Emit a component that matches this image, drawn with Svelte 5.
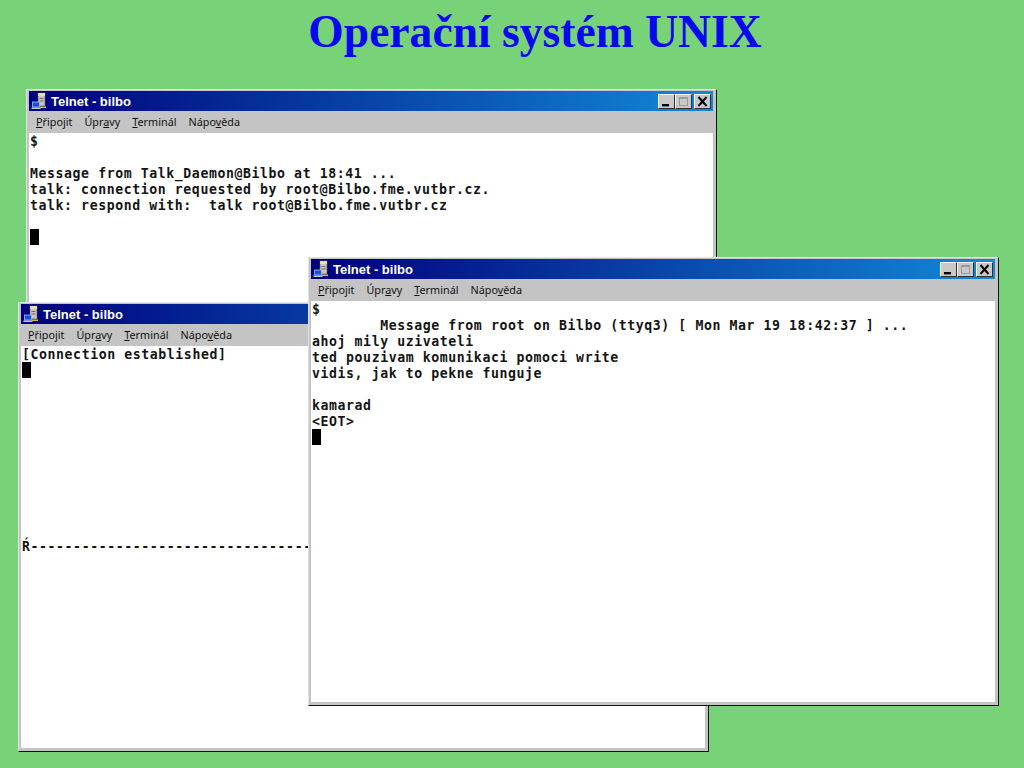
<script>
  const menu = [
    { before: "", key: "P", after: "řipojit" },
    { before: "Úpr", key: "a", after: "vy" },
    { before: "", key: "T", after: "erminál" },
    { before: "Nápo", key: "v", after: "ěda" },
  ];

  const windows = [
    {
      id: "back",
      lines: [
        "$",
        "",
        "Message from Talk_Daemon@Bilbo at 18:41 ...",
        "talk: connection requested by root@Bilbo.fme.vutbr.cz.",
        "talk: respond with:  talk root@Bilbo.fme.vutbr.cz",
        "",
      ],
    },
    {
      id: "left",
      lines: [
        "[Connection established]",
      ],
      after: ["", "", "", "", "", "", "", "", "", "", "Ŕ" + "-".repeat(60)],
    },
    {
      id: "front",
      lines: [
        "$",
        "        Message from root on Bilbo (ttyq3) [ Mon Mar 19 18:42:37 ] ...",
        "ahoj mily uzivateli",
        "ted pouzivam komunikaci pomoci write",
        "vidis, jak to pekne funguje",
        "",
        "kamarad",
        "<EOT>",
      ],
    },
  ];
</script>

<main class="slide">
  <h1>Operační systém UNIX</h1>

  {#each windows as win}
    <section class="window {win.id}">
      <header class="titlebar">
        <svg class="app-icon" viewBox="0 0 18 18" width="18" height="18" aria-hidden="true">
          <rect x="8" y="1" width="7" height="13" fill="#c9c6bc" stroke="#55534c" stroke-width="0.6" />
          <rect x="8" y="1" width="7" height="3" fill="#e8dcb0" />
          <rect x="9.5" y="6" width="4" height="1" fill="#6a6a6a" />
          <rect x="9.5" y="8.5" width="4" height="1" fill="#6a6a6a" />
          <rect x="2.5" y="10" width="7" height="5" fill="#1450e0" stroke="#a8c0f0" stroke-width="0.8" />
          <rect x="1.5" y="15.5" width="9" height="1.5" fill="#c8c8c8" />
          <rect x="10" y="14.5" width="6" height="1.5" fill="#e8b830" />
        </svg>
        <span class="title">Telnet - bilbo</span>
        <div class="controls">
          <button type="button" class="ctl" aria-label="Minimize">
            <svg viewBox="0 0 13 11" width="13" height="11"><rect x="2" y="8" width="7" height="2.4" fill="#000" /></svg>
          </button>
          <button type="button" class="ctl" aria-label="Maximize">
            <svg viewBox="0 0 13 11" width="13" height="11"><rect x="2.5" y="1.5" width="8" height="8" fill="none" stroke="#9a9a9a" /><rect x="2" y="1" width="9" height="2" fill="#9a9a9a" /></svg>
          </button>
          <button type="button" class="ctl close" aria-label="Close">
            <svg viewBox="0 0 13 11" width="13" height="11"><path d="M2.5 1 L10.5 10 M10.5 1 L2.5 10" stroke="#000" stroke-width="2" fill="none" /></svg>
          </button>
        </div>
      </header>
      <nav class="menu">
        {#each menu as item}
          <span>{item.before}<u>{item.key}</u>{item.after}</span>
        {/each}
      </nav>
      <div class="terminal">
        {#each win.lines as line}
          <div class="line">{line}</div>
        {/each}
        <div class="line"><span class="cursor"></span></div>
        {#if win.after}
          {#each win.after as line}
            <div class="line">{line}</div>
          {/each}
        {/if}
      </div>
    </section>
  {/each}
</main>

<style>
  :global(body) {
    margin: 0;
    background: #78d278;
  }

  .slide {
    position: relative;
    width: 1024px;
    height: 768px;
    overflow: hidden;
    background: #78d278;
  }

  h1 {
    margin: 0;
    padding: 6px 0 0 46px;
    text-align: center;
    font: bold 45.6px/52px "Liberation Serif", serif;
    color: #0808f0;
  }

  .window {
    position: absolute;
    box-sizing: border-box;
    width: 691px;
    display: flex;
    flex-direction: column;
    padding: 1px 3px 3px 2px;
    background: #c4c4c4;
    border: 1px solid;
    border-color: #e4e4e4 #111 #111 #e4e4e4;
  }

  .back {
    left: 26px;
    top: 89px;
    height: 320px;
  }

  .left {
    left: 18px;
    top: 302px;
    height: 450px;
  }

  .front {
    left: 308px;
    top: 257px;
    height: 449px;
  }

  .titlebar {
    flex: none;
    height: 20px;
    display: flex;
    align-items: center;
    gap: 3px;
    padding: 0 2px 0 1px;
    background: linear-gradient(90deg, #00007c, #1088d8);
    color: #fff;
  }

  .app-icon {
    flex: none;
  }

  .title {
    font: bold 13px "Liberation Sans", sans-serif;
  }

  .controls {
    margin-left: auto;
    display: flex;
  }

  .ctl {
    box-sizing: border-box;
    width: 17px;
    height: 15px;
    padding: 0;
    display: grid;
    place-items: center;
    background: #c8c8c8;
    border: 1px solid;
    border-color: #f4f4f4 #303030 #303030 #f4f4f4;
  }

  .close {
    margin-left: 2px;
  }

  .menu {
    flex: none;
    box-sizing: border-box;
    height: 22px;
    display: flex;
    align-items: center;
    gap: 12px;
    padding: 0 0 2px 7px;
    font: 10.8px "Noto Sans", sans-serif;
    color: #111;
  }

  .terminal {
    flex: 1;
    min-height: 0;
    overflow: hidden;
    padding-left: 1px;
    background: #fff;
    font: bold 13.2px/18px "DejaVu Sans Mono", monospace;
    letter-spacing: 0.58px;
    color: #141414;
  }

  .line {
    height: 16px;
    white-space: pre;
  }

  .cursor {
    display: block;
    width: 9px;
    height: 16px;
    background: #000;
  }
</style>
